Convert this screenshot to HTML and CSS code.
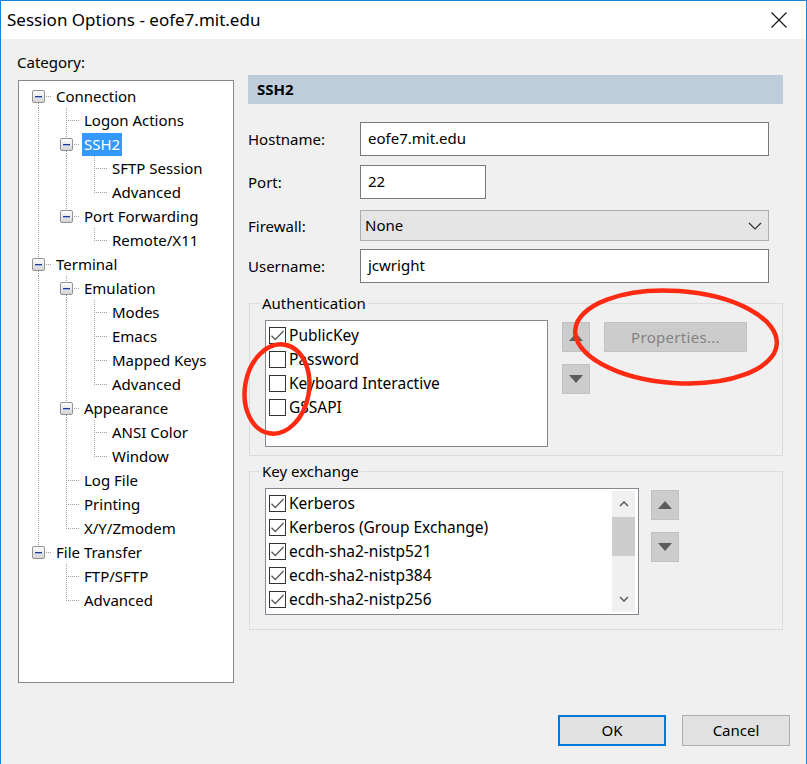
FILE: index.html
```html
<!DOCTYPE html>
<html>
<head>
<meta charset="utf-8">
<title>Session Options</title>
<link rel="stylesheet" href="styles.css">
</head>
<body>
<div class="window">
  <div class="titlebar">
    <span class="title">Session Options - eofe7.mit.edu</span>
    <svg class="close" width="18" height="18" viewBox="0 0 18 18"><path d="M1.5 1.5L16.5 16.5M16.5 1.5L1.5 16.5" stroke="#111" stroke-width="1.1" fill="none"/></svg>
  </div>
  <div class="body">
    <div class="main">
      <div class="left">
        <div class="cat">Category:</div>
        <div class="tree">
          <div class="row"><i class="c b dn"><b class="bx"></b></i><span class="lbl">Connection</span></div>
          <div class="row"><i class="c v"></i><i class="c t"></i><span class="lbl">Logon Actions</span></div>
          <div class="row"><i class="c v"></i><i class="c b up dn"><b class="bx"></b></i><span class="lbl sel">SSH2</span></div>
          <div class="row"><i class="c v"></i><i class="c v"></i><i class="c t"></i><span class="lbl">SFTP Session</span></div>
          <div class="row"><i class="c v"></i><i class="c v"></i><i class="c l"></i><span class="lbl">Advanced</span></div>
          <div class="row"><i class="c v"></i><i class="c b up"><b class="bx"></b></i><span class="lbl">Port Forwarding</span></div>
          <div class="row"><i class="c v"></i><i class="c"></i><i class="c l"></i><span class="lbl">Remote/X11</span></div>
          <div class="row"><i class="c b up dn"><b class="bx"></b></i><span class="lbl">Terminal</span></div>
          <div class="row"><i class="c v"></i><i class="c b up dn"><b class="bx"></b></i><span class="lbl">Emulation</span></div>
          <div class="row"><i class="c v"></i><i class="c v"></i><i class="c t"></i><span class="lbl">Modes</span></div>
          <div class="row"><i class="c v"></i><i class="c v"></i><i class="c t"></i><span class="lbl">Emacs</span></div>
          <div class="row"><i class="c v"></i><i class="c v"></i><i class="c t"></i><span class="lbl">Mapped Keys</span></div>
          <div class="row"><i class="c v"></i><i class="c v"></i><i class="c l"></i><span class="lbl">Advanced</span></div>
          <div class="row"><i class="c v"></i><i class="c b up dn"><b class="bx"></b></i><span class="lbl">Appearance</span></div>
          <div class="row"><i class="c v"></i><i class="c v"></i><i class="c t"></i><span class="lbl">ANSI Color</span></div>
          <div class="row"><i class="c v"></i><i class="c v"></i><i class="c l"></i><span class="lbl">Window</span></div>
          <div class="row"><i class="c v"></i><i class="c t"></i><span class="lbl">Log File</span></div>
          <div class="row"><i class="c v"></i><i class="c t"></i><span class="lbl">Printing</span></div>
          <div class="row"><i class="c v"></i><i class="c l"></i><span class="lbl">X/Y/Zmodem</span></div>
          <div class="row"><i class="c b up"><b class="bx"></b></i><span class="lbl">File Transfer</span></div>
          <div class="row"><i class="c"></i><i class="c t"></i><span class="lbl">FTP/SFTP</span></div>
          <div class="row"><i class="c"></i><i class="c l"></i><span class="lbl">Advanced</span></div>
        </div>
      </div>
      <div class="right">
        <div class="header">SSH2</div>
        <div class="frow f-host"><span class="flabel">Hostname:</span><div class="input wide">eofe7.mit.edu</div></div>
        <div class="frow f-port"><span class="flabel">Port:</span><div class="input port">22</div></div>
        <div class="frow f-fw"><span class="flabel">Firewall:</span><div class="select wide"><span>None</span><svg width="14" height="8" viewBox="0 0 14 8"><path d="M1 1L7 7L13 1" stroke="#333" stroke-width="1.2" fill="none"/></svg></div></div>
        <div class="frow f-user"><span class="flabel">Username:</span><div class="input wide">jcwright</div></div>

        <div class="group g-auth">
          <span class="legend">Authentication</span>
          <div class="grow">
            <div class="list alist">
              <div class="item"><span class="cb"><svg width="17" height="17" viewBox="0 0 17 17"><path d="M2.5 8.7L6.3 12.5L14.5 4" stroke="#5a5a5a" stroke-width="1.3" fill="none"/></svg></span><span>PublicKey</span></div>
              <div class="item"><span class="cb"></span><span>Password</span></div>
              <div class="item"><span class="cb"></span><span>Keyboard Interactive</span></div>
              <div class="item"><span class="cb"></span><span>GSSAPI</span></div>
            </div>
            <div class="arrows">
              <div class="abtn"><svg width="14" height="8" viewBox="0 0 14 8"><path d="M0 8L7 0L14 8Z" fill="#5c5c5c"/></svg></div>
              <div class="abtn"><svg width="14" height="8" viewBox="0 0 14 8"><path d="M0 0L14 0L7 8Z" fill="#5c5c5c"/></svg></div>
            </div>
            <div class="props">Properties...</div>
          </div>
        </div>

        <div class="group g-kex">
          <span class="legend">Key exchange</span>
          <div class="grow">
            <div class="list klist">
              <div class="items">
                <div class="item"><span class="cb"><svg width="17" height="17" viewBox="0 0 17 17"><path d="M2.5 8.7L6.3 12.5L14.5 4" stroke="#5a5a5a" stroke-width="1.3" fill="none"/></svg></span><span>Kerberos</span></div>
                <div class="item"><span class="cb"><svg width="17" height="17" viewBox="0 0 17 17"><path d="M2.5 8.7L6.3 12.5L14.5 4" stroke="#5a5a5a" stroke-width="1.3" fill="none"/></svg></span><span>Kerberos (Group Exchange)</span></div>
                <div class="item"><span class="cb"><svg width="17" height="17" viewBox="0 0 17 17"><path d="M2.5 8.7L6.3 12.5L14.5 4" stroke="#5a5a5a" stroke-width="1.3" fill="none"/></svg></span><span>ecdh-sha2-nistp521</span></div>
                <div class="item"><span class="cb"><svg width="17" height="17" viewBox="0 0 17 17"><path d="M2.5 8.7L6.3 12.5L14.5 4" stroke="#5a5a5a" stroke-width="1.3" fill="none"/></svg></span><span>ecdh-sha2-nistp384</span></div>
                <div class="item"><span class="cb"><svg width="17" height="17" viewBox="0 0 17 17"><path d="M2.5 8.7L6.3 12.5L14.5 4" stroke="#5a5a5a" stroke-width="1.3" fill="none"/></svg></span><span>ecdh-sha2-nistp256</span></div>
              </div>
              <div class="sbar">
                <div class="sarrow"><svg width="10" height="6" viewBox="0 0 10 6"><path d="M1 5L5 1L9 5" stroke="#606060" stroke-width="1.6" fill="none"/></svg></div>
                <div class="thumb"></div>
                <div class="strack"></div>
                <div class="sarrow"><svg width="10" height="6" viewBox="0 0 10 6"><path d="M1 1L5 5L9 1" stroke="#606060" stroke-width="1.6" fill="none"/></svg></div>
              </div>
            </div>
            <div class="arrows k-arrows">
              <div class="abtn"><svg width="14" height="8" viewBox="0 0 14 8"><path d="M0 8L7 0L14 8Z" fill="#5c5c5c"/></svg></div>
              <div class="abtn"><svg width="14" height="8" viewBox="0 0 14 8"><path d="M0 0L14 0L7 8Z" fill="#5c5c5c"/></svg></div>
            </div>
          </div>
        </div>
      </div>
    </div>
    <div class="footer">
      <div class="btn ok">OK</div>
      <div class="btn">Cancel</div>
    </div>
  </div>
  <svg class="marks" width="807" height="764" viewBox="0 0 807 764">
    <ellipse cx="676" cy="337" rx="101" ry="46" transform="rotate(4 676 337)" fill="none" stroke="#ff2a12" stroke-width="4.5"/>
    <ellipse cx="277" cy="389" rx="32" ry="45" transform="rotate(10 277 389)" fill="none" stroke="#ff2a12" stroke-width="4.5"/>
  </svg>
</div>
</body>
</html>
```

FILE: styles.css
```css
* { box-sizing: border-box; }
html, body { margin: 0; padding: 0; }
body {
  font-family: "Noto Sans", "Open Sans", sans-serif;
  font-size: 15px;
  color: #000;
  background: #f0f0f0;
}
.window {
  position: relative;
  width: 807px;
  height: 764px;
  border: 1px solid #1883d7;
  border-bottom: none;
  background: #f0f0f0;
  display: flex;
  flex-direction: column;
  overflow: hidden;
}
.titlebar {
  height: 38px;
  flex: none;
  background: #fff;
  display: flex;
  align-items: center;
  justify-content: space-between;
  padding: 0 18px 0 6px;
}
.title { font-size: 17px; line-height: 22px; }
.close { display: block; }

.body { flex: 1; padding: 13px 0 0 17px; }
.main { display: grid; grid-template-columns: 216px 535px; column-gap: 14px; }
.cat { line-height: 20px; height: 20px; margin-left: -1px; margin-bottom: 8px; }

.tree {
  width: 216px;
  height: 603px;
  background: #fff;
  border: 1px solid #828790;
  padding: 3px 0 0 5px;
}
.row { display: flex; align-items: flex-start; height: 24px; white-space: nowrap; }
.c {
  display: block;
  width: 28px;
  height: 24px;
  flex: none;
  --vd: repeating-linear-gradient(to bottom, #a0a0a0 0 1px, transparent 1px 2px);
  --hd: repeating-linear-gradient(to right, #a0a0a0 0 1px, transparent 1px 2px);
  --none: linear-gradient(transparent, transparent);
}
.v { background: var(--vd) 14px 0 / 1px 24px no-repeat; }
.t { background: var(--vd) 14px 0 / 1px 24px no-repeat, var(--hd) 16px 12px / 12px 1px no-repeat; }
.l { background: var(--vd) 14px 0 / 1px 13px no-repeat, var(--hd) 16px 12px / 12px 1px no-repeat; }
.b {
  --u: var(--none);
  --d: var(--none);
  background: var(--u) 14px 0 / 1px 6px no-repeat, var(--d) 14px 19px / 1px 5px no-repeat, var(--hd) 22px 12px / 6px 1px no-repeat;
  padding-top: 6px;
}
.b.up { --u: var(--vd); }
.b.dn { --d: var(--vd); }
.bx {
  display: flex;
  align-items: center;
  justify-content: center;
  width: 13px;
  height: 13px;
  margin-left: 8px;
  border: 1px solid #939393;
  border-radius: 2px;
  background: linear-gradient(#fdfdfd, #d4d4d4);
}
.bx::before { content: ""; width: 7px; height: 1px; background: #1c3e96; box-shadow: 0 0.5px 0 #5a73b8; }
.lbl { line-height: 23px; margin-top: 1px; margin-left: 2px; padding: 0 2px; }
.lbl.sel { background: #3399ff; color: #fff; }

.right { margin-top: 23px; }
.header {
  height: 29px;
  background: #bfcddb;
  font-weight: bold;
  line-height: 29px;
  padding-left: 9px;
}
.frow { display: flex; align-items: center; }
.flabel { width: 112px; flex: none; }
.f-host { margin-top: 18px; }
.f-port { margin-top: 9px; }
.f-fw { margin-top: 11px; }
.f-user { margin-top: 8px; }
.input {
  height: 34px;
  background: #fff;
  border: 1px solid #7a7a7a;
  padding: 0 7px;
  line-height: 30px;
}
.wide { width: 409px; }
.port { width: 126px; }
.select {
  height: 31px;
  background: #e5e5e5;
  border: 1px solid #adadad;
  display: flex;
  align-items: center;
  justify-content: space-between;
  padding: 0 6px 0 4px;
  line-height: 28px;
}
.select span { padding-bottom: 2px; }

.group {
  margin-left: 1px;
  width: 534px;
  border: 1px solid #dcdcdc;
  padding: 0 0 0 15px;
}
.g-auth { margin-top: 20px; padding-bottom: 8px; }
.g-kex { margin-top: 15px; padding-bottom: 14px; }
.legend {
  display: block;
  width: max-content;
  line-height: 20px;
  margin: -11px 0 0 -5px;
  padding: 0 2px;
  background: #f0f0f0;
}
.grow { display: flex; align-items: flex-start; margin-top: 7px; }
.list {
  background: #fff;
  border: 1px solid #828790;
  height: 127px;
  padding: 2px;
  font-size: 15.5px;
}
.alist { width: 283px; }
.klist { width: 374px; display: flex; }
.items { flex: 1; }
.item { display: flex; align-items: center; height: 24px; white-space: nowrap; }
.cb {
  display: block;
  width: 17px;
  height: 17px;
  flex: none;
  border: 1px solid #333;
  background: #fff;
  margin: 0 3px 0 1px;
}
.cb svg { display: block; margin: -1px; }
.arrows { display: flex; flex-direction: column; gap: 12px; margin: 2px 0 0 14px; }
.k-arrows { margin-left: 12px; }
.abtn {
  width: 28px;
  height: 30px;
  background: #cccccc;
  border: 1px solid #c2c2c2;
  display: flex;
  align-items: center;
  justify-content: center;
}
.abtn svg { display: block; }
.props {
  margin: 2px 0 0 14px;
  width: 143px;
  height: 30px;
  background: #cccccc;
  border: 1px solid #c2c2c2;
  color: #838383;
  text-align: center;
  line-height: 28px;
  letter-spacing: 0.3px;
}
.sbar {
  width: 23px;
  flex: none;
  background: #f0f0f0;
  display: flex;
  flex-direction: column;
  margin-right: 1px;
}
.sarrow { height: 26px; display: flex; align-items: center; justify-content: center; flex: none; }
.sarrow svg { display: block; }
.thumb { height: 39px; background: #cdcdcd; flex: none; }
.strack { flex: 1; }

.footer {
  display: flex;
  justify-content: flex-end;
  gap: 16px;
  margin-top: 32px;
  padding-right: 16px;
}
.btn {
  width: 108px;
  height: 31px;
  background: #e1e1e1;
  border: 1px solid #adadad;
  text-align: center;
  line-height: 29px;
}
.btn.ok { border: 2px solid #0078d7; line-height: 27px; }

.marks { position: absolute; left: -1px; top: -1px; pointer-events: none; }
```
